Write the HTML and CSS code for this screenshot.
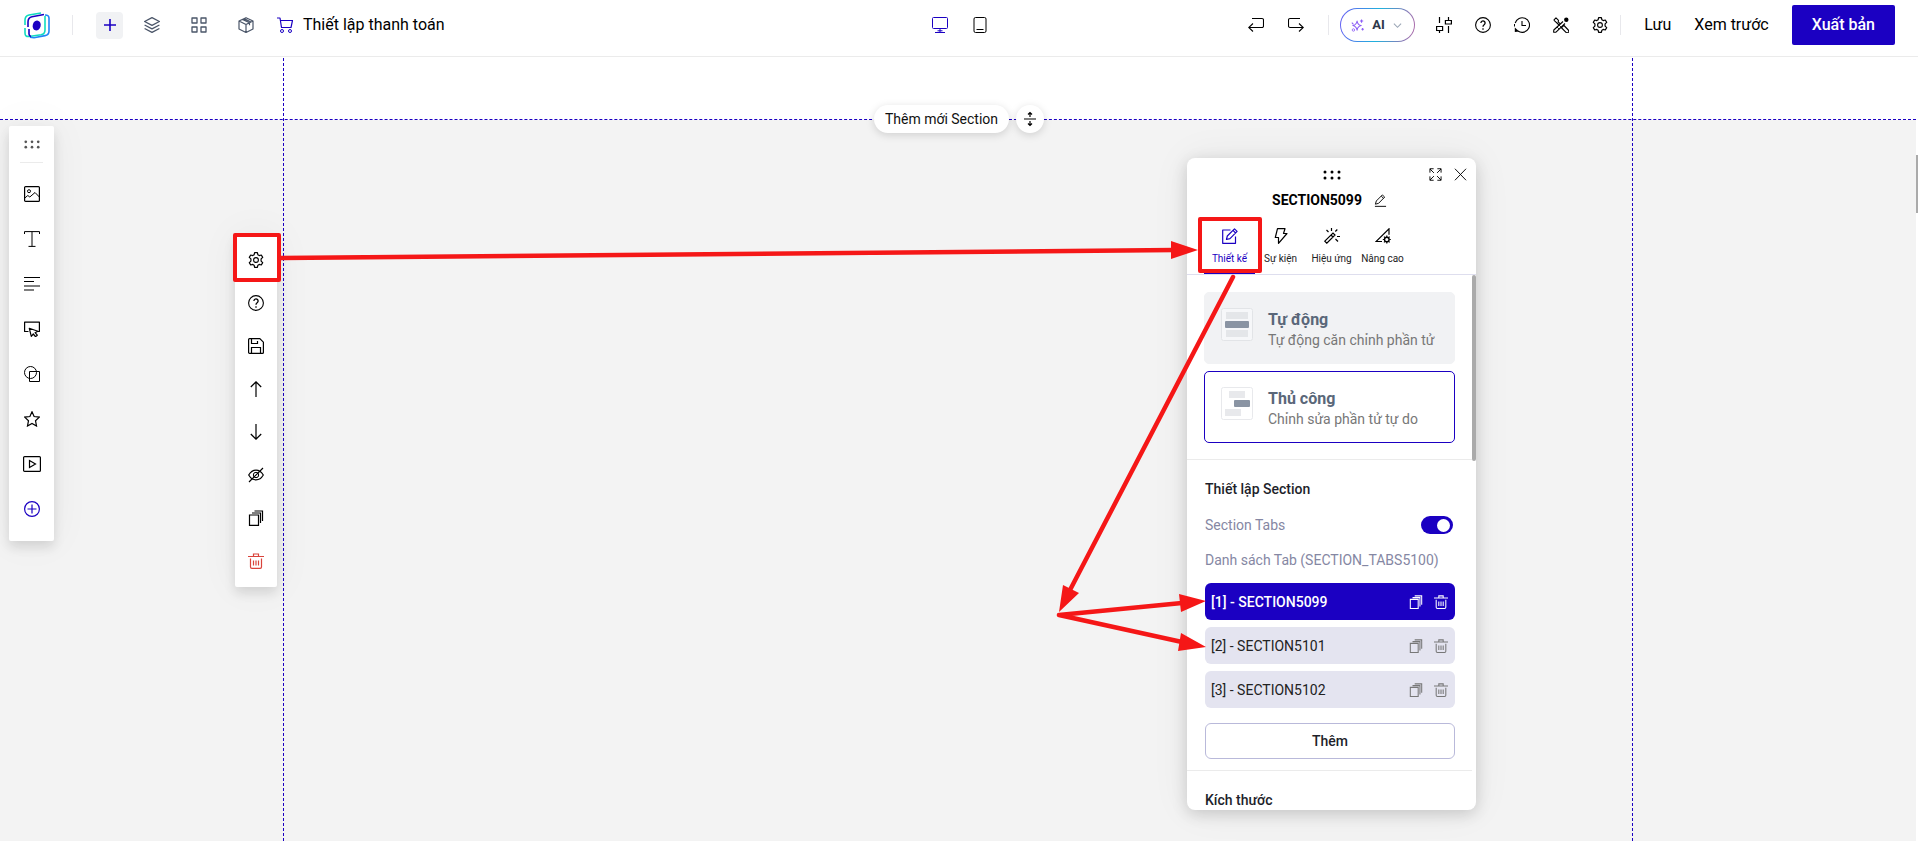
FILE: index.html
```
<!DOCTYPE html>
<html lang="vi">
<head>
    <meta charset="UTF-8">
    <meta name="viewport" content="width=device-width, initial-scale=1.0">
    <title>Thiết lập thanh toán</title>
    <link rel="stylesheet" href="styles.css">
</head>
<body>
    <!-- Icon set -->
    <svg class="icon-set" aria-hidden="true">
        <symbol id="i-plus" viewBox="0 0 16 16"><path d="M8 2v12M2 8h12" stroke-width="1.6"/></symbol>
        <symbol id="i-layers" viewBox="0 0 16 16"><path d="M8 .7 15.4 4.500 8 8.300.6 4.500ZM.6 8 8 11.800 15.400 8M.6 11.500 8 15.300 15.400 11.500" stroke-width="1.300" stroke-linejoin="round"/></symbol>
        <symbol id="i-grid" viewBox="0 0 16 16"><path d="M1 1h5v5H1ZM10 1h5v5h-5ZM1 10h5v5H1ZM10 10h5v5h-5Z" stroke-width="1.300" stroke-linejoin="round"/></symbol>
        <symbol id="i-cube" viewBox="0 0 16 16"><path d="M8 .7 15 4v8l-7 3.500L1 12V4ZM1 4l7 3.500L15 4M8 7.500v8M4.500 2.400l7 3.400v2.500M6 1.600l7 3.400" stroke-width="1.200" stroke-linejoin="round"/></symbol>
        <symbol id="i-cart" viewBox="0 0 16 16"><path d="M0 1h3l1.500 9.500h9.500L15.500 3.500H3.500" stroke-width="1.200" stroke-linejoin="round"/><circle cx="5" cy="14" r="1.500"/><circle cx="13" cy="14" r="1.500"/></symbol>
        <symbol id="i-desktop" viewBox="0 0 16 16"><rect x=".5" y=".5" width="15" height="11" rx="1"/><path d="M8 12v3.500M3 15.500h10M5.500 13.800h5"/></symbol>
        <symbol id="i-tablet" viewBox="0 0 16 16"><rect x="2" y=".5" width="12" height="15" rx="1.500"/><path d="M4.500 12.500h7"/></symbol>
        <symbol id="i-undo" viewBox="0 0 16 16"><path d="M4 1.500h10a1.500 1.500 0 0 1 1.500 1.500v6a1.500 1.500 0 0 1-1.500 1.500H1M5 6.500l-4.300 4L5 14.500" stroke-width="1.100"/></symbol>
        <symbol id="i-redo" viewBox="0 0 16 16"><path d="M12 1.500H2A1.500 1.500 0 0 0 .5 3v6A1.500 1.500 0 0 0 2 10.500h13M11 6.500l4.300 4-4.300 4" stroke-width="1.100"/></symbol>
        <symbol id="i-sparkle" viewBox="0 0 16 16"><path d="M7.500 2.500c.5 3.500 1.800 5 5 5.600-3.200.7-4.500 2.200-5 5.700-.6-3.500-2-5-5.200-5.700 3.200-.6 4.600-2.100 5.200-5.600ZM13 .5v4M11 2.500h4M14.300 11v3M12.800 12.500h3M1 4.500l2 2" stroke-width="1.300" stroke-linejoin="round"/><circle cx="3" cy="13.500" r="1.500"/></symbol>
        <symbol id="i-chevron" viewBox="0 0 10 10"><path d="m1 3 4 4 4-4" stroke-width="1.200"/></symbol>
        <symbol id="i-sliders" viewBox="0 0 16 16"><path d="M3.500 0v6M3.500 13.500V16M12.500 0v3M12.500 9v7M.6 9.500h6v4h-6ZM9.400 3.500h6v3.500h-6Z" stroke-width="1.200"/></symbol>
        <symbol id="i-help" viewBox="0 0 16 16"><circle cx="8" cy="8" r="7.400" stroke-width="1.100"/><path d="M5.900 6a2.100 2.100 0 1 1 3.500 1.600C8.500 8.300 8 8.700 8 9.800M8 11.200v1.500" stroke-width="1.300"/></symbol>
        <symbol id="i-history" viewBox="0 0 16 16"><path d="M1.200 6A7.300 7.300 0 1 1 4 14M8 4v4.500h4" stroke-width="1.100"/><path d="M.5 7v2.500" stroke-width="1"/><path d="M.8 10.500v4.500l4.400-.5Z" fill="currentColor" stroke="none"/></symbol>
        <symbol id="i-tools" viewBox="0 0 16 16"><path d="M.8 3.200 3 .8l2.500 2.500-.3 1.500 2 2M3.500 5.700l-2.700-2.500M3.500 5.500 6 8M9.500 9.500l1.500-1 4.300 4.500a1.500 1.500 0 0 1-2.300 2.300L8.700 11ZM10 4.500.8 13l-.2 2.300 2.400-.1L12 6.500" stroke-width="1.100" stroke-linejoin="round"/><path d="m4 10 2 2M6 8l2 2" stroke-width=".8"/><circle cx="13.300" cy="2.700" r="2.200" fill="currentColor" stroke="none"/></symbol>
        <symbol id="i-gear" viewBox="0 0 16 16"><path d="M6.600.7h2.800l.5 2.100 1.300.8 2.100-.6 1.400 2.400-1.600 1.500v2.200l1.600 1.500-1.400 2.400-2.100-.6-1.300.8-.5 2.100H6.600l-.5-2.100-1.300-.8-2.100.6-1.400-2.400 1.600-1.500V6.900L1.300 5.400 2.700 3l2.100.6 1.300-.8Z" stroke-width="1.200" stroke-linejoin="round"/><circle cx="8" cy="8" r="2.400" stroke-width="1.100"/></symbol>
        <symbol id="i-split" viewBox="0 0 16 16"><path d="M2 8h12M8 6V1.500M8 10v4.500M6 3.500l2-2 2 2M6 12.500l2 2 2-2" stroke-width="1.200"/></symbol>
        <symbol id="i-grip" viewBox="0 0 18 10"><g fill="currentColor" stroke="none"><circle cx="2" cy="2" r="1.500"/><circle cx="9" cy="2" r="1.500"/><circle cx="16" cy="2" r="1.500"/><circle cx="2" cy="8" r="1.500"/><circle cx="9" cy="8" r="1.500"/><circle cx="16" cy="8" r="1.500"/></g></symbol>
        <symbol id="i-image" viewBox="0 0 16 16"><rect x=".6" y=".6" width="14.800" height="14.800" rx="1" stroke-width="1.200"/><circle cx="5" cy="5.200" r="1.500"/><path d="m.8 12 3-2.500 2 1.500L11 6.500l4.400 4.500"/></symbol>
        <symbol id="i-text" viewBox="0 0 16 16"><path d="M.5 3V.6h15V3M8 .6v14.800M4.500 15.400h7"/></symbol>
        <symbol id="i-lines" viewBox="0 0 16 16"><path d="M0 1.500h16M0 5.500h10M0 10h16M0 14h10" stroke-width="1.200"/></symbol>
        <symbol id="i-button" viewBox="0 0 16 16"><path d="M4.500 10.500H.6V1.200h14.800v9.300h-2M5.300 7.300l2 8 2-2.300 2.200 2.700 1.800-1.500-2.200-2.500 2.800-1.400Z" stroke-width="1.200" stroke-linejoin="round"/></symbol>
        <symbol id="i-shapes" viewBox="0 0 16 16"><circle cx="6.500" cy="6.500" r="6"/><path d="M5.500 5.500h10v10h-10Z"/></symbol>
        <symbol id="i-star" viewBox="0 0 16 16"><path d="m8 .8 2.100 4.700 5.200.6-3.800 3.600 1 5.300L8 12.400 3.500 15l1-5.300L.7 6.100l5.200-.6Z" stroke-width="1.200"/></symbol>
        <symbol id="i-video" viewBox="0 0 18 16"><rect x=".6" y=".6" width="16.800" height="14.800" rx="1" stroke-width="1.200"/><path d="M6.500 4.500v7L12.500 8Z" stroke-width="1.200"/></symbol>
        <symbol id="i-add" viewBox="0 0 16 16"><circle cx="8" cy="8" r="7.400" stroke-width="1.200"/><path d="M8 3.500v9M3.500 8h9" stroke-width="1.200"/></symbol>
        <symbol id="i-save" viewBox="0 0 16 16"><path d="M1.500.6h10.300l3.600 3.600v10.200a1 1 0 0 1-1 1H1.600a1 1 0 0 1-1-1V1.600a1 1 0 0 1 .9-1ZM3.500.8v4.700h6V3M3.500 15.300V9.500h9v5.800" stroke-width="1.200"/></symbol>
        <symbol id="i-up" viewBox="0 0 16 16"><path d="M8 16V.8M2.800 6 8 .8 13.200 6" stroke-width="1.200"/></symbol>
        <symbol id="i-down" viewBox="0 0 16 16"><path d="M8 0v15.200M2.800 10 8 15.200 13.200 10" stroke-width="1.200"/></symbol>
        <symbol id="i-hide" viewBox="0 0 16 16"><path d="M.7 8C4.500 1.500 11.500 1.500 15.300 8 11.500 14.500 4.500 14.500.7 8ZM1 15 15 1" stroke-width="1.200"/><circle cx="8" cy="8" r="2.700"/></symbol>
        <symbol id="i-copy" viewBox="0 0 16 16"><path d="M1.500 5h9v10.400h-9ZM4 3h8.500v10M6.500 1h8v10" stroke-width="1.200"/></symbol>
        <symbol id="i-trash" viewBox="0 0 16 16"><path d="M0 3.500h16M5.500 3.500V1h5v2.500M2.500 5.500v8.500a1.400 1.400 0 0 0 1.400 1.400h8.200a1.400 1.400 0 0 0 1.400-1.400V5.500M5.500 7.500v5M8 7.500v5M10.500 7.500v5" stroke-width="1.200"/></symbol>
        <symbol id="i-expand" viewBox="0 0 14 14"><path d="M5 .8H1V5M1 1l4.300 4.300M9 .8h4V5M13 1 8.700 5.300M1 9v4.200h4M1 13l4.300-4.300M13 9v4.200H9M13 13 8.700 8.700"/></symbol>
        <symbol id="i-close" viewBox="0 0 14 14"><path d="m1 .8 12 12.400M13 .8 1 13.200"/></symbol>
        <symbol id="i-pen" viewBox="0 0 14 14"><path d="M1.500 11 2.500 7.500 9 1l2.500 2.300L5 10ZM7.800 2.300l2.400 2.300M1 13.300h12" stroke-linejoin="round"/></symbol>
        <symbol id="i-design" viewBox="0 0 16 16"><path d="M8.500 2H.7v13.300h12.800V8.500M4.500 11.500l.8-3.500L12.500.9l2.600 2.500L8 10.600ZM11 2.400 13.600 5" stroke-width="1.200" stroke-linejoin="round"/></symbol>
        <symbol id="i-bolt" viewBox="0 0 16 16"><path d="M4.500.7H12L10.500 5.500H14L5.500 15.300V9.500H2.300Z" stroke-width="1.200" stroke-linejoin="round"/></symbol>
        <symbol id="i-wand" viewBox="0 0 16 16"><path d="m.8 13.200 8.200-8.200 2 2-8.200 8.200ZM7 7l2 2M7.500 0v3M2.500 2l2 2M13.300 1.500l-2 2M13 8.500h3M11.500 11l2.500 2.500" stroke-width="1.200"/></symbol>
        <symbol id="i-advanced" viewBox="0 0 16 16"><path d="M7 13.500H1L14 .8v6" stroke-width="1.200"/><circle cx="11.800" cy="11.500" r="2.300" stroke-width="1.400"/><path d="M11.800 7.500v1.500M11.800 14v1.500M7.800 11.500h1.500M14.300 11.500h1.500M9 8.700l1 1M13.600 13.300l1 1M14.600 8.700l-1 1M9 14.300l1-1" stroke-width="1.200"/></symbol>
    </svg>

    <header class="topbar">
        <div class="topbar-left">
            <a href="#" class="logo" aria-label="Trang chủ">
                <svg width="26" height="27" viewBox="0 0 26 27" fill="none">
                    <path d="M1 13V8q0-4 4-5L17 1M1 16v5q0 4 4 3.500l12-1.700q4-.8 4-4.800V4" stroke="#10dcc0" stroke-width="1.600"/>
                    <path d="M21 3q4 0 4 3v13q0 4-4 4.600l-11 2.200-4-.6" stroke="#2186f5" stroke-width="1.600"/>
                    <path d="M20 2.500 8 4.700Q4 5.500 4 10v5M5 17v5q0 2 2 2.500" stroke="#1b00c2" stroke-width="1.600"/>
                    <ellipse cx="12.700" cy="13.500" rx="4" ry="5" fill="#1b00c2" transform="rotate(15 12.700 13.500)"/>
                </svg>
            </a>
            <span class="divider"></span>
            <button class="icon-button primary" aria-label="Thêm"><svg class="icon"><use href="#i-plus"/></svg></button>
            <div class="topbar-tools">
                <button class="icon-button slate" aria-label="Lớp"><svg class="icon"><use href="#i-layers"/></svg></button>
                <button class="icon-button slate" aria-label="Khối"><svg class="icon"><use href="#i-grid"/></svg></button>
                <button class="icon-button slate" aria-label="Sản phẩm"><svg class="icon"><use href="#i-cube"/></svg></button>
            </div>
            <a href="#" class="checkout"><svg class="icon"><use href="#i-cart"/></svg>Thiết lập thanh toán</a>
        </div>

        <div class="devices">
            <button class="icon-button active" aria-label="Máy tính"><svg class="icon"><use href="#i-desktop"/></svg></button>
            <button class="icon-button" aria-label="Di động"><svg class="icon"><use href="#i-tablet"/></svg></button>
        </div>

        <div class="topbar-right">
            <div class="undo-group">
                <button class="icon-button" aria-label="Hoàn tác"><svg class="icon"><use href="#i-undo"/></svg></button>
                <button class="icon-button" aria-label="Làm lại"><svg class="icon"><use href="#i-redo"/></svg></button>
            </div>
            <span class="divider"></span>
            <button class="ai-button"><svg class="icon sparkle"><use href="#i-sparkle"/></svg>AI<svg class="icon chevron"><use href="#i-chevron"/></svg></button>
            <div class="option-group">
                <button class="icon-button" aria-label="Tùy chỉnh"><svg class="icon"><use href="#i-sliders"/></svg></button>
                <button class="icon-button" aria-label="Trợ giúp"><svg class="icon"><use href="#i-help"/></svg></button>
                <button class="icon-button" aria-label="Lịch sử"><svg class="icon"><use href="#i-history"/></svg></button>
                <button class="icon-button" aria-label="Công cụ"><svg class="icon"><use href="#i-tools"/></svg></button>
                <button class="icon-button" aria-label="Cài đặt"><svg class="icon"><use href="#i-gear"/></svg></button>
            </div>
            <span class="divider"></span>
            <nav class="page-actions">
                <button class="text-button">Lưu</button>
                <button class="text-button">Xem trước</button>
                <button class="publish">Xuất bản</button>
            </nav>
        </div>
    </header>

    <main class="canvas">
        <div class="page">
            <div class="blank-section"></div>
            <div class="gray-section"></div>
        </div>
        <div class="page-scroll"></div>
        <div class="guides"></div>

        <div class="add-section">
            <button class="add-pill">Thêm mới Section</button>
            <button class="add-resize" aria-label="Thay đổi chiều cao"><svg class="icon"><use href="#i-split"/></svg></button>
        </div>

        <aside class="toolbar element-toolbar">
            <div class="toolbar-grip"><svg><use href="#i-grip"/></svg></div>
            <div class="toolbar-list">
                <button aria-label="Ảnh"><svg class="icon"><use href="#i-image"/></svg></button>
                <button aria-label="Văn bản"><svg class="icon"><use href="#i-text"/></svg></button>
                <button aria-label="Đoạn văn"><svg class="icon"><use href="#i-lines"/></svg></button>
                <button aria-label="Nút"><svg class="icon"><use href="#i-button"/></svg></button>
                <button aria-label="Hình khối"><svg class="icon"><use href="#i-shapes"/></svg></button>
                <button aria-label="Biểu tượng"><svg class="icon"><use href="#i-star"/></svg></button>
                <button aria-label="Video"><svg class="icon wide"><use href="#i-video"/></svg></button>
                <button class="accent" aria-label="Thêm phần tử"><svg class="icon"><use href="#i-add"/></svg></button>
            </div>
        </aside>

        <aside class="toolbar section-toolbar">
            <button aria-label="Thiết lập"><svg class="icon"><use href="#i-gear"/></svg></button>
            <button aria-label="Trợ giúp"><svg class="icon"><use href="#i-help"/></svg></button>
            <button aria-label="Lưu section"><svg class="icon"><use href="#i-save"/></svg></button>
            <button aria-label="Lên"><svg class="icon"><use href="#i-up"/></svg></button>
            <button aria-label="Xuống"><svg class="icon"><use href="#i-down"/></svg></button>
            <button aria-label="Ẩn"><svg class="icon"><use href="#i-hide"/></svg></button>
            <button aria-label="Nhân bản"><svg class="icon"><use href="#i-copy"/></svg></button>
            <button class="danger" aria-label="Xóa"><svg class="icon"><use href="#i-trash"/></svg></button>
        </aside>

        <section class="panel">
            <div class="panel-header">
                <div class="panel-bar">
                    <svg class="panel-grip"><use href="#i-grip"/></svg>
                    <div class="panel-window">
                        <button aria-label="Mở rộng"><svg><use href="#i-expand"/></svg></button>
                        <button aria-label="Đóng"><svg><use href="#i-close"/></svg></button>
                    </div>
                </div>
                <div class="panel-title">
                    <h1>SECTION5099</h1>
                    <button aria-label="Đổi tên"><svg><use href="#i-pen"/></svg></button>
                </div>
                <div class="tabs">
                    <button class="tab selected"><svg class="icon"><use href="#i-design"/></svg>Thiết kế</button>
                    <button class="tab"><svg class="icon"><use href="#i-bolt"/></svg>Sự kiện</button>
                    <button class="tab"><svg class="icon"><use href="#i-wand"/></svg>Hiệu ứng</button>
                    <button class="tab"><svg class="icon"><use href="#i-advanced"/></svg>Nâng cao</button>
                </div>
            </div>

            <div class="panel-body">
                <div class="modes">
                    <button class="mode">
                        <svg class="mode-icon" viewBox="0 0 32 33"><rect x=".5" y=".5" width="31" height="32" rx="2" fill="#f6f7f9" stroke="#e2e4e7"/><path d="M5 4h22v7H5ZM5 22h22v7H5Z" fill="#e4e6e9"/><rect x="4" y="13" width="24" height="7" rx="1" fill="#8a94a3"/></svg>
                        <span class="mode-text"><strong>Tự động</strong><span>Tự động căn chỉnh phần tử</span></span>
                    </button>
                    <button class="mode chosen">
                        <svg class="mode-icon" viewBox="0 0 32 33"><rect x=".5" y=".5" width="31" height="32" rx="2" fill="#fff" stroke="#e8e9ec"/><path d="M8 4h16v7H8ZM4 22h16v7H4Z" fill="#e8e9ec"/><rect x="13" y="13" width="16" height="7" rx="1" fill="#8a94a3"/></svg>
                        <span class="mode-text"><strong>Thủ công</strong><span>Chỉnh sửa phần tử tự do</span></span>
                    </button>
                </div>

                <div class="settings">
                    <h2>Thiết lập Section</h2>
                    <div class="switch-row">
                        <label for="sectionTabs">Section Tabs</label>
                        <input type="checkbox" id="sectionTabs" class="switch" checked>
                    </div>
                    <p class="hint">Danh sách Tab (SECTION_TABS5100)</p>
                    <ul class="tab-list">
                        <li class="current">[1] - SECTION5099
                            <span><button aria-label="Nhân bản"><svg><use href="#i-copy"/></svg></button><button aria-label="Xóa"><svg><use href="#i-trash"/></svg></button></span>
                        </li>
                        <li>[2] - SECTION5101
                            <span><button aria-label="Nhân bản"><svg><use href="#i-copy"/></svg></button><button aria-label="Xóa"><svg><use href="#i-trash"/></svg></button></span>
                        </li>
                        <li>[3] - SECTION5102
                            <span><button aria-label="Nhân bản"><svg><use href="#i-copy"/></svg></button><button aria-label="Xóa"><svg><use href="#i-trash"/></svg></button></span>
                        </li>
                    </ul>
                    <button class="add-tab">Thêm</button>
                </div>

                <div class="settings">
                    <h2>Kích thước</h2>
                </div>
            </div>
            <div class="panel-scroll"></div>
        </section>
    </main>

    <!-- Guide arrows drawn over the editor -->
    <svg class="annotations" width="1918" height="841" viewBox="0 0 1918 841" aria-hidden="true">
        <g fill="none" stroke="#f51717" stroke-width="4" stroke-linejoin="round">
            <rect x="235" y="235" width="44" height="45"/>
            <rect x="1200" y="219" width="60" height="52"/>
        </g>
        <g stroke="#f51717" stroke-width="4.500" stroke-linecap="round">
            <path d="M281 258 1175 250M1233 277 1070 590M1059 615 1182 603M1059 615 1182 642"/>
        </g>
        <path fill="#f51717" d="M1198 250 1171 241v18ZM1059 612l4-27 16 8ZM1206 601l-27-7 2 18ZM1206 647l-25-14-3 18Z"/>
    </svg>
</body>
</html>
```

FILE: styles.css
```
* {
    box-sizing: border-box;
}

body {
    margin: 0;
    height: 100vh;
    display: flex;
    flex-direction: column;
    overflow: hidden;
    position: relative;
    font-family: Roboto, sans-serif;
    font-size: 14px;
    line-height: 20px;
    color: #000;
    background: #fff;
}

button {
    padding: 0;
    border: none;
    background: none;
    font: inherit;
    color: inherit;
    cursor: pointer;
}

h1, h2, p, ul {
    margin: 0;
    padding: 0;
}

svg {
    display: block;
    flex-shrink: 0;
    fill: none;
    stroke: currentColor;
}

.icon-set {
    display: none;
}

.logo svg,
.mode-icon,
.annotations {
    stroke: none;
}

.icon {
    width: 16px;
    height: 16px;
}

.icon.wide {
    width: 18px;
}

/* Top bar */
.topbar {
    display: grid;
    grid-template-columns: 1fr auto 1fr;
    align-items: start;
    padding: 5px 23px 11px 24px;
    border-bottom: 1px solid #ebebeb;
}

.topbar-left,
.topbar-right,
.topbar-tools,
.devices,
.undo-group,
.option-group,
.page-actions,
.checkout {
    display: flex;
    align-items: center;
}

.topbar-left,
.topbar-right,
.devices {
    height: 40px;
}

.topbar-right {
    justify-content: flex-end;
}

.divider {
    width: 1px;
    height: 20px;
    background: #e8e8ec;
}

.topbar-left .divider {
    margin: 0 23px 0 22px;
}

.icon-button {
    width: 24px;
    height: 27px;
    display: flex;
    align-items: center;
    justify-content: center;
}

.topbar-left .icon-button {
    width: 27px;
}

.icon-button.primary {
    color: #1b00c2;
    background: #f1f2f4;
    border-radius: 4px;
}

.icon-button.slate {
    color: #4a5568;
}

.icon-button.active {
    color: #1b00c2;
}

.topbar-tools {
    gap: 20px;
    margin: 0 18px 0 15px;
}

.checkout {
    gap: 10px;
    font-size: 16px;
    color: #000;
    text-decoration: none;
}

.checkout .icon {
    color: #1b00c2;
}

.devices,
.undo-group {
    gap: 16px;
}

.option-group {
    gap: 15px;
    margin: 0 8px 0 17px;
}

.undo-group {
    margin-right: 20px;
}

.ai-button {
    display: flex;
    align-items: center;
    gap: 8px;
    width: 75px;
    height: 34px;
    margin-left: 11px;
    padding: 0 10px;
    font-size: 13px;
    font-weight: 700;
    color: #2d3748;
    border: 1px solid transparent;
    border-radius: 17px;
    background: linear-gradient(#fff, #fff) padding-box, linear-gradient(100deg, #6a5cf5, #1fb1dd 50%, #b565a7) border-box;
}

.icon.sparkle {
    width: 13px;
    height: 13px;
    color: #8b5cf6;
}

.icon.chevron {
    width: 9px;
    height: 9px;
    color: #9aa5b5;
}

.page-actions {
    gap: 23px;
    margin-left: 23px;
}

.text-button {
    font-size: 16px;
}

.publish {
    height: 40px;
    padding: 0 20px;
    font-size: 16px;
    font-weight: 500;
    color: #fff;
    background: #1b00c2;
    border-radius: 2px;
}

/* Canvas */
.canvas {
    flex: 1;
    display: flex;
    position: relative;
}

.page {
    flex: 1;
    display: flex;
    flex-direction: column;
}

.blank-section {
    height: 63px;
    border-bottom: 1px dashed #1b00c2;
}

.gray-section {
    flex: 1;
    background: #f3f3f3;
}

.page-scroll {
    width: 2px;
    height: 58px;
    margin-top: 98px;
    background: #aaa;
}

.guides {
    position: absolute;
    top: 1px;
    bottom: 0;
    left: 283px;
    right: 285px;
    border: 1px dashed #1b00c2;
    border-width: 0 1px;
}

.add-section {
    position: absolute;
    top: 48px;
    left: 0;
    right: 0;
    display: flex;
    justify-content: center;
    gap: 7px;
}

.add-pill,
.add-resize {
    height: 28px;
    background: #fff;
    border-radius: 14px;
    box-shadow: 0 2px 8px rgba(0, 0, 0, 0.15);
}

.add-pill {
    padding: 0 11px;
    color: #111;
}

.add-resize {
    width: 28px;
    display: flex;
    align-items: center;
    justify-content: center;
}

/* Floating toolbars */
.toolbar {
    position: absolute;
    background: #fff;
    border-radius: 2px;
    box-shadow: 0 6px 12px rgba(0, 0, 0, 0.12), 0 0 40px rgba(0, 0, 0, 0.05);
}

.toolbar button {
    width: 100%;
    display: flex;
    align-items: center;
    justify-content: center;
}

.element-toolbar {
    top: 69px;
    left: 9px;
    width: 45px;
}

.element-toolbar button {
    height: 45px;
}

.toolbar-grip {
    margin: 0 11px;
    height: 37px;
    display: flex;
    align-items: center;
    justify-content: center;
    border-bottom: 1px solid #ebebeb;
    color: #555;
}

.toolbar-grip svg {
    width: 16px;
    height: 9px;
}

.toolbar-list {
    padding: 8px 0 10px;
}

.toolbar .accent {
    color: #1b00c2;
}

.toolbar .danger {
    color: #d9433b;
}

.section-toolbar {
    top: 177px;
    left: 235px;
    width: 42px;
    padding: 4px 0 5px;
}

.section-toolbar button {
    height: 43px;
}

/* Settings panel */
.panel {
    position: absolute;
    top: 101px;
    bottom: 31px;
    right: 442px;
    width: 289px;
    display: flex;
    flex-direction: column;
    overflow: hidden;
    background: #fff;
    border-radius: 8px;
    box-shadow: 0 4px 16px rgba(0, 0, 0, 0.16), 0 0 40px rgba(0, 0, 0, 0.06);
}

.panel-header {
    border-bottom: 1px solid #dedeee;
}

.panel-bar {
    height: 33px;
    display: grid;
    grid-template-columns: 1fr auto 1fr;
    align-items: center;
    padding: 0 9px;
}

.panel-grip {
    grid-column: 2;
    width: 18px;
    height: 10px;
}

.panel-window {
    display: flex;
    justify-content: flex-end;
    gap: 12px;
}

.panel-window svg {
    width: 13px;
    height: 13px;
}

.panel-title {
    display: flex;
    align-items: center;
    justify-content: center;
    gap: 12px;
    height: 18px;
    padding-right: 4px;
}

.panel-title h1 {
    font-size: 14px;
    font-weight: 700;
}

.panel-title svg {
    width: 13px;
    height: 13px;
}

.tabs {
    display: flex;
    padding: 0 17px;
}

.tab {
    width: 51px;
    display: flex;
    flex-direction: column;
    align-items: center;
    gap: 9px;
    padding: 19px 0 7px;
    font-size: 10px;
    line-height: 12px;
    white-space: nowrap;
    color: #222;
    border-bottom: 2px solid transparent;
}

.tab .icon {
    color: #000;
}

.tab.selected,
.tab.selected .icon {
    color: #1b00c2;
}

.tab.selected {
    border-color: #1b00c2;
}

.panel-body {
    flex: 1;
    min-height: 0;
    overflow: hidden;
    padding-right: 4px;
}

.panel-scroll {
    position: absolute;
    top: 117px;
    right: 0;
    width: 4px;
    height: 186px;
    background: #aaa;
    border-radius: 2px;
}

.modes {
    display: flex;
    flex-direction: column;
    gap: 7px;
    padding: 17px 17px 16px;
    border-bottom: 1px solid #ebebeb;
}

.mode {
    display: flex;
    align-items: flex-start;
    gap: 15px;
    padding: 15px 16px 13px;
    text-align: left;
    background: #f1f2f4;
    border: 1px solid #f1f2f4;
    border-radius: 5px;
}

.mode.chosen {
    background: #fff;
    border-color: #1b00c2;
}

.mode-icon {
    width: 32px;
    height: 33px;
}

.mode-text {
    padding-top: 2px;
    color: #777;
}

.mode-text span,
.mode-text strong {
    display: block;
}

.mode-text strong {
    font-size: 16px;
    font-weight: 700;
    color: #5a6779;
}

.settings {
    padding: 19px 17px 11px 18px;
    border-bottom: 1px solid #ebebeb;
}

.settings h2 {
    font-size: 14px;
    font-weight: 500;
    color: #1e1f2b;
}

.switch-row {
    display: flex;
    align-items: center;
    justify-content: space-between;
    margin-top: 16px;
    padding-right: 2px;
    color: #8587a3;
}

.switch {
    appearance: none;
    display: flex;
    justify-content: flex-end;
    align-items: center;
    width: 32px;
    height: 18px;
    margin: 0;
    padding: 3px;
    background: #1b00c2;
    border-radius: 9px;
}

.switch::before {
    content: "";
    width: 13px;
    height: 13px;
    background: #fff;
    border-radius: 50%;
}

.hint {
    margin-top: 15px;
    color: #8587a3;
}

.tab-list {
    display: flex;
    flex-direction: column;
    gap: 7px;
    margin: 13px 0 15px;
    list-style: none;
}

.tab-list li {
    display: flex;
    align-items: center;
    justify-content: space-between;
    height: 37px;
    padding: 0 7px 0 6px;
    color: #222;
    background: #e4e4f0;
    border-radius: 6px;
}

.tab-list li.current {
    font-weight: 500;
    color: #fff;
    background: #1b00c2;
}

.tab-list span {
    display: flex;
    gap: 11px;
    color: #777;
}

.tab-list .current span {
    color: #fff;
}

.tab-list svg {
    width: 14px;
    height: 14px;
}

.add-tab {
    width: 100%;
    height: 36px;
    font-weight: 500;
    color: #1e1f2b;
    border: 1px solid #b9b9da;
    border-radius: 6px;
}

.annotations {
    position: absolute;
    top: 0;
    left: 0;
    pointer-events: none;
}
```
